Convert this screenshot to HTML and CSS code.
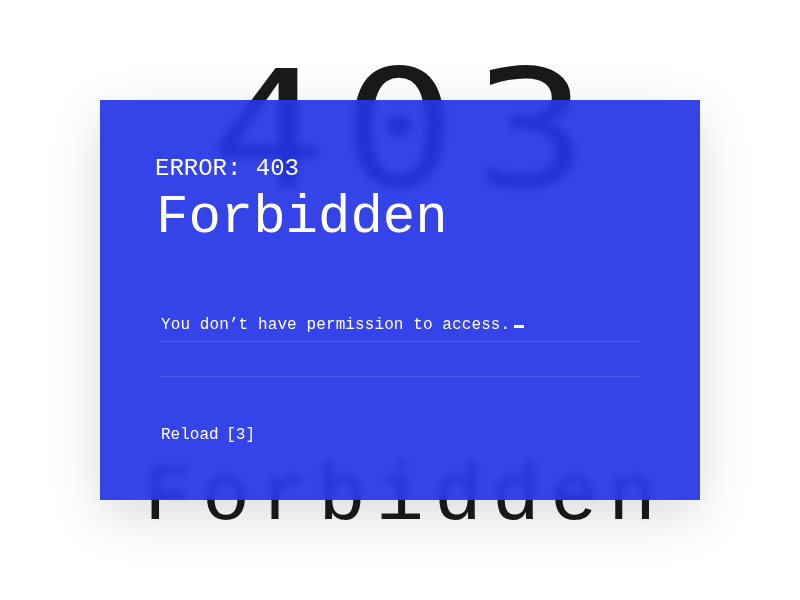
FILE: index.html
```html
<!DOCTYPE html>
<html lang="en">
<head>
<meta charset="utf-8">
<title>403 Forbidden</title>
<link rel="stylesheet" href="styles.css">
</head>
<body>
<div class="stage">
  <div class="backdrop">
    <div class="big-code">403</div>
    <div class="big-word">Forbidden</div>
  </div>
  <main class="card">
    <div class="eyebrow">ERROR: 403</div>
    <h1 class="title">Forbidden</h1>
    <p class="message">You don’t have permission to access.<span class="cursor"></span></p>
    <div class="spacer-row"></div>
    <div class="actions"><span class="reload">Reload</span> <span class="count">[3]</span></div>
  </main>
</div>
</body>
</html>
```

FILE: styles.css
```css
* { box-sizing: border-box; }
html, body { margin: 0; padding: 0; }
body {
  background: #ffffff;
  font-family: "Liberation Mono", "DejaVu Sans Mono", monospace;
  color: #1a1a1a;
  width: 800px;
  height: 600px;
  overflow: hidden;
}
.stage {
  position: relative;
  width: 800px;
  height: 600px;
}
.backdrop {
  height: 600px;
  display: flex;
  flex-direction: column;
  align-items: center;
}
.big-code {
  font-family: "DejaVu Sans Mono", monospace;
  font-size: 162px;
  line-height: 1;
  letter-spacing: 14px;
  margin-top: 49px;
  margin-left: 14px;
  transform: scaleX(1.18);
  color: #1a1a1a;
}
.big-word {
  font-size: 80px;
  line-height: 1;
  letter-spacing: 10px;
  margin-top: 247px;
  margin-left: 10px;
  color: #1a1a1a;
}
.card {
  position: absolute;
  left: 100px;
  top: 100px;
  width: 600px;
  height: 400px;
  padding: 57px 60px 0 60px;
  background: rgba(35, 52, 230, 0.92);
  backdrop-filter: blur(4px);
  -webkit-backdrop-filter: blur(4px);
  box-shadow: 0 16px 50px rgba(0, 0, 0, 0.14);
  color: #ffffff;
}
.eyebrow {
  font-size: 24px;
  line-height: 1;
  margin-left: -5px;
}
.title {
  margin: 10px 0 0 -4px;
  font-size: 54px;
  line-height: 1;
  font-weight: normal;
}
.message {
  margin: 72px 0 0 0;
  padding: 0 0 8px 1px;
  font-size: 16px;
  line-height: 1;
  letter-spacing: 0.1px;
  border-bottom: 1px solid rgba(255, 255, 255, 0.12);
}
.cursor {
  display: inline-block;
  width: 10px;
  height: 3px;
  margin: 0 0 1px 4px;
  background: #ffffff;
}
.spacer-row {
  height: 35px;
  border-bottom: 1px solid rgba(255, 255, 255, 0.12);
}
.actions {
  margin-top: 50px;
  padding-left: 1px;
  font-size: 16px;
  line-height: 1;
}
.count { margin-left: -2px; }
```
